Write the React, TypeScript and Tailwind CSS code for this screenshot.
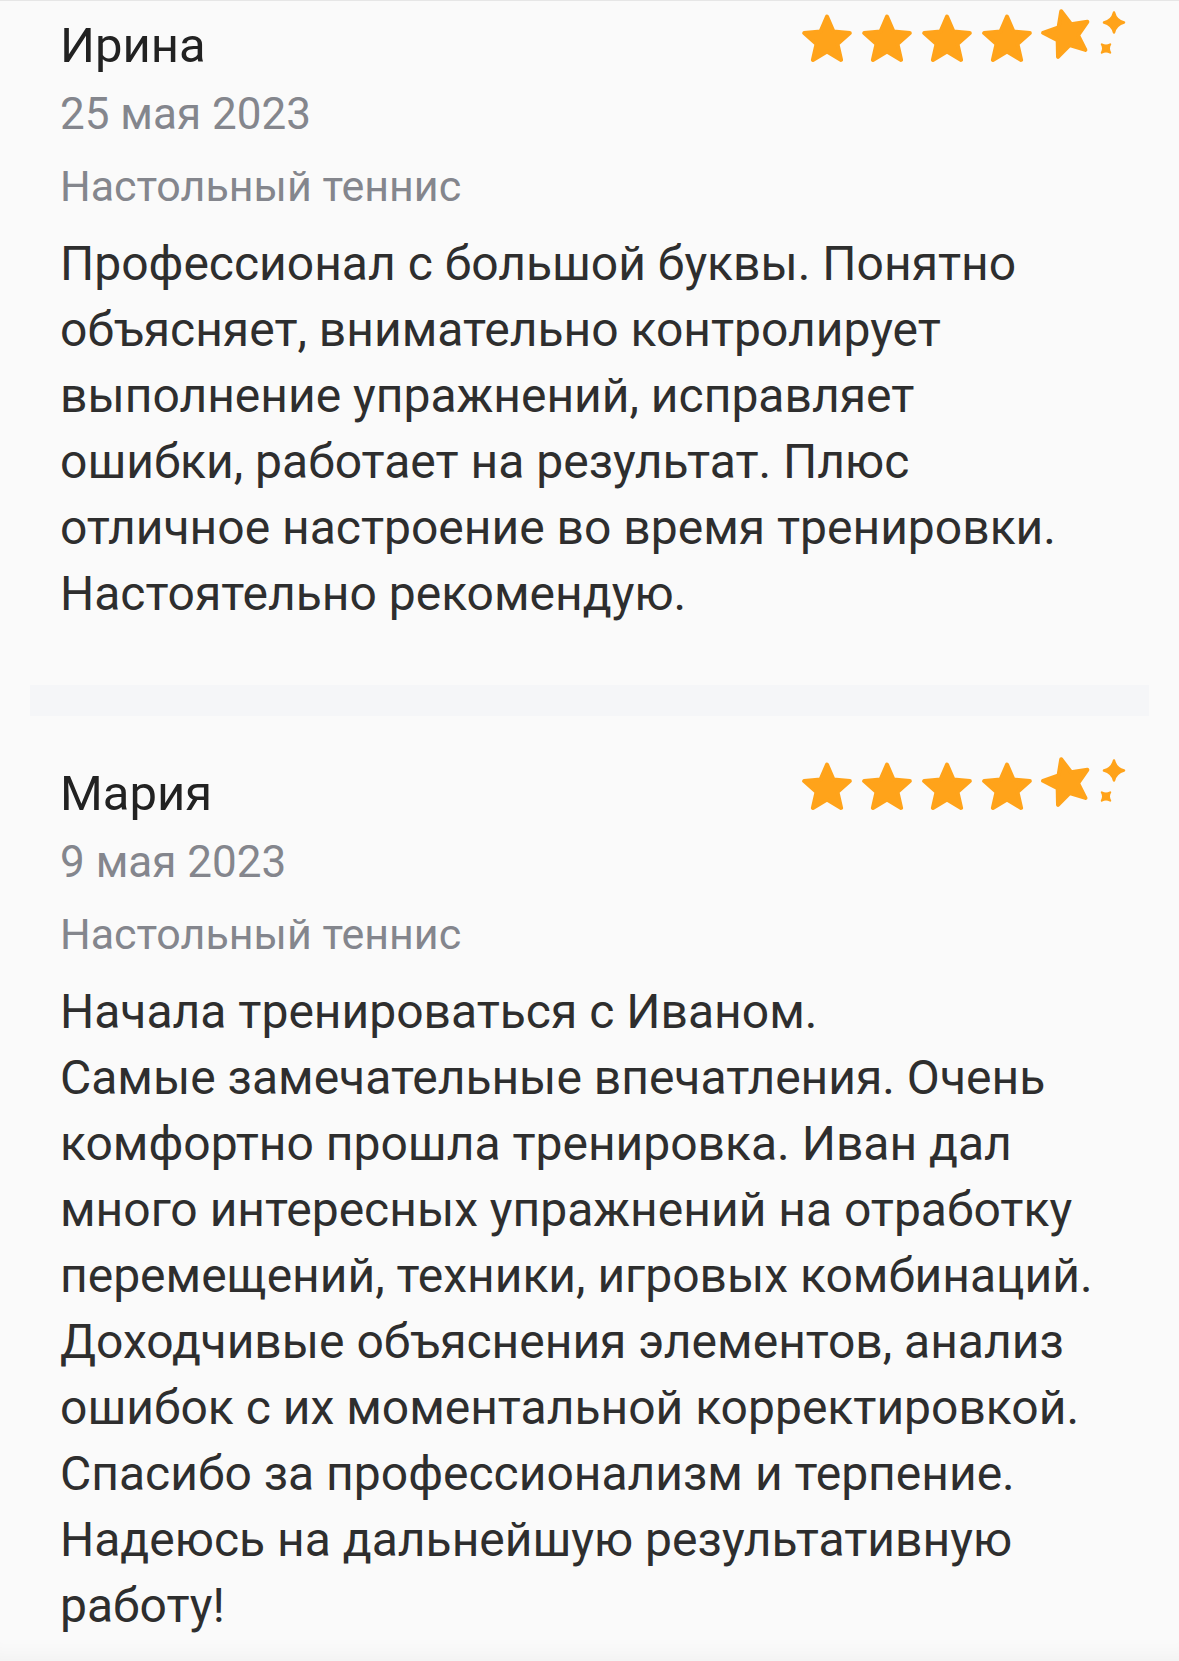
const reviews = [
  {
    name: "Ирина",
    date: "25 мая 2023",
    sport: "Настольный теннис",
    lines: [
      "Профессионал с большой буквы. Понятно",
      "объясняет, внимательно контролирует",
      "выполнение упражнений, исправляет",
      "ошибки, работает на результат. Плюс",
      "отличное настроение во время тренировки.",
      "Настоятельно рекомендую.",
    ],
  },
  {
    name: "Мария",
    date: "9 мая 2023",
    sport: "Настольный теннис",
    lines: [
      "Начала тренироваться с Иваном.",
      "Самые замечательные впечатления. Очень",
      "комфортно прошла тренировка. Иван дал",
      "много интересных упражнений на отработку",
      "перемещений, техники, игровых комбинаций.",
      "Доходчивые объяснения элементов, анализ",
      "ошибок с их моментальной корректировкой.",
      "Спасибо за профессионализм и терпение.",
      "Надеюсь на дальнейшую результативную",
      "работу!",
    ],
  },
];

const STAR =
  "0,-24 6.47,-8.9 22.83,-7.42 10.46,3.4 14.11,19.42 0,11 -14.11,19.42 -10.46,3.4 -22.83,-7.42 -6.47,-8.9";

function Rating() {
  const color = "#ffa31a";
  return (
    <svg width="334" height="66" viewBox="0 0 334 66" className="shrink-0 overflow-visible">
      {[31, 91, 151, 211].map((x) => (
        <polygon
          key={x}
          points={STAR}
          transform={`translate(${x} 27.5)`}
          fill={color}
          stroke={color}
          strokeWidth="4"
          strokeLinejoin="round"
        />
      ))}
      <polygon
        points={STAR}
        transform="translate(271 21.5) rotate(-14)"
        fill={color}
        stroke={color}
        strokeWidth="4"
        strokeLinejoin="round"
      />
      {/* sparkles */}
      <path
        d="M0,-10 Q2,-2 10,0 Q2,2 0,10 Q-2,2 -10,0 Q-2,-2 0,-10Z"
        transform="translate(318 9.5)"
        fill={color}
        stroke={color}
        strokeWidth="2.5"
        strokeLinejoin="round"
      />
      <path
        d="M0,-6 Q1.2,-1.2 6,0 Q1.2,1.2 0,6 Q-1.2,1.2 -6,0 Q-1.2,-1.2 0,-6Z"
        transform="translate(310 35.5) rotate(45)"
        fill={color}
        stroke={color}
        strokeWidth="2"
        strokeLinejoin="round"
      />
    </svg>
  );
}

function ReviewCard({ review, first }: { review: (typeof reviews)[number]; first?: boolean }) {
  return (
    <div className={first ? "pl-[60px] pr-[49px] pt-[12px] pb-[58px]" : "pl-[60px] pr-[49px] pt-[45px]"}>
      <div className="flex items-start justify-between">
        <div className="text-[49px] leading-[66px] text-[#222222]">{review.name}</div>
        <Rating />
      </div>
      <div className="mt-[2px] text-[44px] leading-[66px] text-[#84868d]">{review.date}</div>
      <div className="mt-[6px] text-[43px] leading-[66px] text-[#84868d]">{review.sport}</div>
      <div className="mt-[12px] text-[48px] leading-[66px] text-[#2e2e2e]">
        {review.lines.map((line) => (
          <div key={line} className="whitespace-nowrap">
            {line}
          </div>
        ))}
      </div>
    </div>
  );
}

export default function App() {
  return (
    <div
      className="h-[1661px] w-full overflow-hidden border-t border-[#e6e6e6] bg-[#fafafa] shadow-[inset_0_-20px_18px_-14px_rgba(0,0,0,0.035)]"
      style={{ fontFamily: "Roboto, 'Noto Sans', sans-serif" }}
    >
      <ReviewCard review={reviews[0]} first />
      <div className="mx-[30px] h-[31px] bg-[#f5f6f8]" />
      <ReviewCard review={reviews[1]} />
    </div>
  );
}
